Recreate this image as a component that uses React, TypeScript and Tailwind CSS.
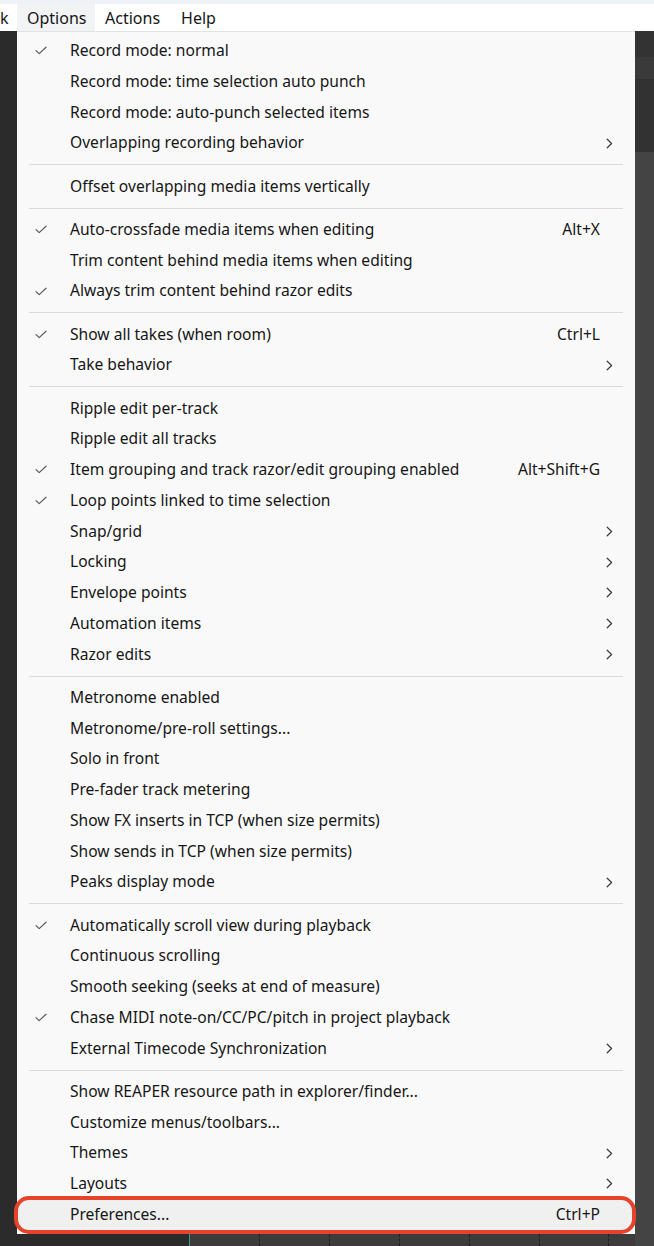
import React from 'react'

type Item = { label: string; checked?: boolean; shortcut?: string; sub?: boolean; active?: boolean }

const groups: Item[][] = [
  [
    { label: 'Record mode: normal', checked: true },
    { label: 'Record mode: time selection auto punch' },
    { label: 'Record mode: auto-punch selected items' },
    { label: 'Overlapping recording behavior', sub: true },
  ],
  [{ label: 'Offset overlapping media items vertically' }],
  [
    { label: 'Auto-crossfade media items when editing', checked: true, shortcut: 'Alt+X' },
    { label: 'Trim content behind media items when editing' },
    { label: 'Always trim content behind razor edits', checked: true },
  ],
  [
    { label: 'Show all takes (when room)', checked: true, shortcut: 'Ctrl+L' },
    { label: 'Take behavior', sub: true },
  ],
  [
    { label: 'Ripple edit per-track' },
    { label: 'Ripple edit all tracks' },
    { label: 'Item grouping and track razor/edit grouping enabled', checked: true, shortcut: 'Alt+Shift+G' },
    { label: 'Loop points linked to time selection', checked: true },
    { label: 'Snap/grid', sub: true },
    { label: 'Locking', sub: true },
    { label: 'Envelope points', sub: true },
    { label: 'Automation items', sub: true },
    { label: 'Razor edits', sub: true },
  ],
  [
    { label: 'Metronome enabled' },
    { label: 'Metronome/pre-roll settings...' },
    { label: 'Solo in front' },
    { label: 'Pre-fader track metering' },
    { label: 'Show FX inserts in TCP (when size permits)' },
    { label: 'Show sends in TCP (when size permits)' },
    { label: 'Peaks display mode', sub: true },
  ],
  [
    { label: 'Automatically scroll view during playback', checked: true },
    { label: 'Continuous scrolling' },
    { label: 'Smooth seeking (seeks at end of measure)' },
    { label: 'Chase MIDI note-on/CC/PC/pitch in project playback', checked: true },
    { label: 'External Timecode Synchronization', sub: true },
  ],
  [
    { label: 'Show REAPER resource path in explorer/finder...' },
    { label: 'Customize menus/toolbars...' },
    { label: 'Themes', sub: true },
    { label: 'Layouts', sub: true },
    { label: 'Preferences...', shortcut: 'Ctrl+P', active: true },
  ],
]

function Check() {
  return (
    <svg width="12" height="9" viewBox="0 0 12 9" fill="none">
      <path d="M1 4.6 L4.2 7.6 L11 1.2" stroke="#5a5a5a" strokeWidth="1.2" strokeLinecap="round" strokeLinejoin="round" />
    </svg>
  )
}

function Chevron() {
  return (
    <svg width="7" height="11" viewBox="0 0 7 11" fill="none">
      <path d="M1.2 1.2 L5.6 5.5 L1.2 9.8" stroke="#3a3a3a" strokeWidth="1.2" strokeLinecap="round" strokeLinejoin="round" />
    </svg>
  )
}

function Row({ item }: { item: Item }) {
  return (
    <div className="relative flex h-[30.75px] items-center">
      {item.active && (
        <div className="absolute -left-[3px] -right-[1px] -top-[3px] -bottom-[4px] rounded-[15px] border-[4px] border-[#e5432b] bg-[#f0f0f0]" />
      )}
      <div className="relative flex w-[53px] shrink-0 justify-start pl-[18px]">{item.checked && <Check />}</div>
      <span className="relative flex-1 whitespace-nowrap">{item.label}</span>
      {item.shortcut && <span className="relative pr-[35px] whitespace-nowrap">{item.shortcut}</span>}
      {item.sub && (
        <span className="relative flex pr-[22px]">
          <Chevron />
        </span>
      )}
    </div>
  )
}

export default function App() {
  const ticks = [259, 329, 399, 469, 539, 608]
  return (
    <div
      className="relative flex h-[1246px] w-[654px] flex-col overflow-hidden bg-[#2b2b2b] text-[15.6px] text-[#161616]"
      style={{ fontFamily: '"Noto Sans", "Open Sans", sans-serif' }}
    >
      <div className="h-[4px] bg-[#eef2f7]" />
      <div className="flex h-[27px] items-center bg-white text-[16px]">
        <span className="w-[17px] pl-0">k</span>
        <span className="flex h-full w-[78px] items-center bg-[#f2f3f5] pl-[10px]">Options</span>
        <span className="ml-[10px]">Actions</span>
        <span className="ml-[21px]">Help</span>
      </div>
      <div className="flex flex-1">
        <div className="w-[17px] bg-[#2b2b2b]" />
        <div className="flex w-[618px] flex-col">
          <div className="border-t border-[#e2e2e2] bg-[#f9f9f9] pt-[3.5px] pb-[4px]">
            {groups.map((g, gi) => (
              <div key={gi}>
                {gi > 0 && (
                  <div className="flex h-[12.5px] items-center px-[12px]">
                    <div className="h-px flex-1 bg-[#d9d9d9]" />
                  </div>
                )}
                {g.map((it) => (
                  <Row key={it.label} item={it} />
                ))}
              </div>
            ))}
          </div>
          <div className="relative flex flex-1">
            <div className="w-[172px] bg-[#2b2b2b]" />
            <div className="w-px bg-[#3d9c8e]" />
            <div className="flex-1 bg-[#3c3c3c]" />
            {ticks.map((x) => (
              <div
                key={x}
                className="absolute top-0 bottom-0 w-px border-l border-dashed border-[#1e1e1e]"
                style={{ left: x - 17 }}
              />
            ))}
          </div>
        </div>
        <div className="flex w-[19px] flex-col">
          <div className="h-[26px] bg-[#333333]" />
          <div className="h-[22px] bg-[#3a3a3a]" />
          <div className="h-[73px] bg-[#323232]" />
          <div className="flex-1 bg-[#444444]" />
        </div>
      </div>
    </div>
  )
}
